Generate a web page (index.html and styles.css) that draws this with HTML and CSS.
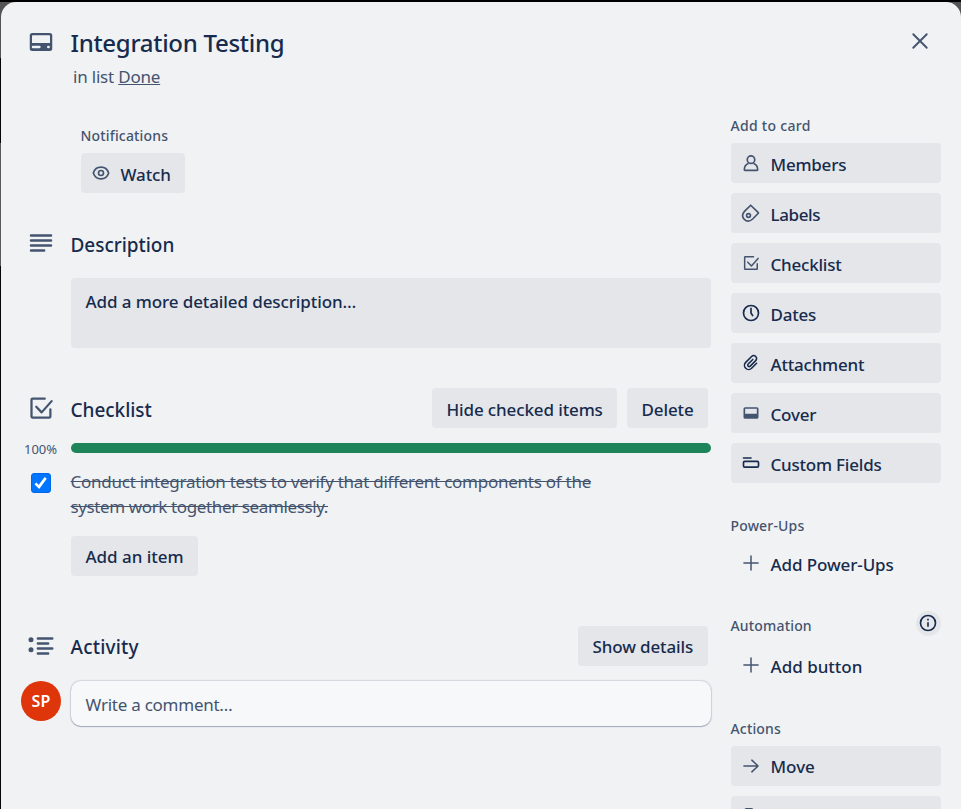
FILE: index.html
```html
<!DOCTYPE html>
<html lang="en">
<head>
<meta charset="utf-8">
<title>Integration Testing</title>
<link rel="stylesheet" href="styles.css">
</head>
<body>
<div class="card">
  <button class="close" aria-label="Close"><svg class="i30" viewBox="0 0 24 24"><path d="M6.6 6.6 17.4 17.4M17.4 6.6 6.6 17.4" fill="none" stroke="currentColor" stroke-width="1.5" stroke-linecap="round"/></svg></button>
  <header class="head">
    <div class="gutter"><svg class="i30" viewBox="0 0 24 24"><path fill="currentColor" fill-rule="evenodd" d="M5 4.800h14a2 2 0 0 1 2 2v10.400a2 2 0 0 1-2 2H5a2 2 0 0 1-2-2V6.800a2 2 0 0 1 2-2Zm.4 1.800a.6.6 0 0 0-.6.6V12.800h14.400V7.200a.6.6 0 0 0-.6-.6ZM5.600 15a1 1 0 0 0 0 2H10.700a1 1 0 0 0 0-2Zm12.200 0a1 1 0 0 0 0 2h.3a1 1 0 0 0 0-2Z"/></svg></div>
    <div><h1>Integration Testing</h1><p class="sub">in list <a>Done</a></p></div>
  </header>
  <div class="columns">
    <main>
      <section class="notif">
        <h3>Notifications</h3>
        <button class="btn watch"><svg class="i20" viewBox="0 0 24 24"><g fill="none" stroke="currentColor" stroke-width="2"><path d="M2.800 12C4.200 7.500 8 5 12 5s7.800 2.500 9.200 7c-1.400 4.500-5.200 7-9.200 7s-7.800-2.500-9.200-7Z"/><circle cx="12" cy="12" r="3"/></g></svg><span>Watch</span></button>
      </section>
      <section class="desc">
        <div class="row"><div class="gutter up"><svg class="i30" viewBox="0 0 24 24"><path d="M4 6h16M4 10h16M4 14h16M4 18h10.500" fill="none" stroke="currentColor" stroke-width="2" stroke-linecap="round"/></svg></div><h2>Description</h2></div>
        <div class="descbox"><span>Add a more detailed description…</span></div>
      </section>
      <section class="check">
        <div class="row"><div class="gutter"><svg class="i30" viewBox="0 0 24 24"><g fill="none" stroke="currentColor" stroke-width="1.800" stroke-linecap="round" stroke-linejoin="round"><path d="M15 4.500H5.200a.8.8 0 0 0-.8.8v13.500a.8.8 0 0 0 .8.8h13.500a.8.8 0 0 0 .8-.8V13"/><path d="m8.200 11 4.300 4.500 8-9"/></g></svg></div><h2>Checklist</h2>
          <div class="tools"><button class="btn hide"><span>Hide checked items</span></button><button class="btn del"><span>Delete</span></button></div></div>
        <div class="progress"><span class="pct">100%</span><div class="bar"></div></div>
        <div class="item"><div class="gutter"><span class="box"><svg viewBox="0 0 20 20"><path d="m3.800 10.400 4 3.900 7.400-10" fill="none" stroke="#fff" stroke-width="3"/></svg></span></div><p><s>Conduct integration tests to verify that different components of the</s><br><s class="tight">system work together seamlessly.</s></p></div>
        <button class="btn additem"><span>Add an item</span></button>
      </section>
      <section class="activity">
        <div class="row"><div class="gutter"><svg class="i30" viewBox="0 0 24 24"><g fill="none" stroke="currentColor" stroke-width="2" stroke-linecap="round"><path d="M9.500 6H21M9.500 10h8.200M9.500 14H21M9.500 18h8.200"/></g><g fill="currentColor"><circle cx="4" cy="7" r="2"/><circle cx="4" cy="15" r="2"/></g></svg></div><h2 class="loose">Activity</h2>
          <div class="tools"><button class="btn show"><span>Show details</span></button></div></div>
        <div class="comment"><div class="avatar">SP</div><div class="field"><span>Write a comment…</span></div></div>
      </section>
    </main>
    <aside>
      <h3 class="addto">Add to card</h3>
      <nav>
        <button class="btn side"><svg class="i20" viewBox="0 0 24 24"><g fill="none" stroke="currentColor" stroke-width="2"><circle cx="12" cy="8" r="4.500"/><path d="M9 12.500C6 13.500 4 16.500 4 20a.8.8 0 0 0 .8.8h14.400a.8.8 0 0 0 .8-.8c0-3.500-2-6.500-5-7.500"/></g></svg><span>Members</span></button>
        <button class="btn side"><svg class="i20" viewBox="0 0 24 24"><g fill="none" stroke="currentColor" stroke-width="2" stroke-linejoin="round"><path d="m11.600 2.700 8.900 8.500a1 1 0 0 1 0 1.400l-6.500 6.600C10.800 22.200 6.800 22.500 4 19.700S1.600 13 4.400 9.800Z"/><circle cx="9" cy="15" r="2.300"/></g></svg><span class="labels">Labels</span></button>
        <button class="btn side"><svg class="i20" viewBox="0 0 24 24"><g fill="none" stroke="currentColor" stroke-width="1.800" stroke-linecap="round" stroke-linejoin="round"><path d="M15 4.500H5.200a.8.8 0 0 0-.8.8v13.500a.8.8 0 0 0 .8.8h13.500a.8.8 0 0 0 .8-.8V13"/><path d="m8.200 11 4.300 4.500 8-9"/></g></svg><span>Checklist</span></button>
        <button class="btn side"><svg class="i20 dark" viewBox="0 0 24 24"><g fill="none" stroke="currentColor" stroke-width="2" stroke-linecap="round"><circle cx="12" cy="12" r="9"/><path d="M12 6.500V12l2 3.200"/></g></svg><span>Dates</span></button>
        <button class="btn side"><svg class="i20 dark" viewBox="0 0 24 24"><path transform="rotate(45 12 12)" d="M17 7.500v8.500a5 5 0 0 1-10 0V6a3.500 3.500 0 0 1 7 0V15.300a1.750 1.750 0 0 1-3.500 0V7.500" fill="none" stroke="currentColor" stroke-width="1.900" stroke-linecap="round"/></svg><span>Attachment</span></button>
        <button class="btn side"><svg class="i20" viewBox="0 0 24 24"><path fill="currentColor" fill-rule="evenodd" d="M5 5h14a2 2 0 0 1 2 2v10a2 2 0 0 1-2 2H5a2 2 0 0 1-2-2V7a2 2 0 0 1 2-2Zm0 1.800v6.200h14V6.800Z"/></svg><span>Cover</span></button>
        <button class="btn side"><svg class="i20 dark" viewBox="0 0 24 24"><g fill="none" stroke="currentColor" stroke-width="2" stroke-linecap="round"><path d="M3 6h9"/><rect x="3" y="10" width="18" height="7" rx="1.500"/></g></svg><span>Custom Fields</span></button>
      </nav>
      <h3 class="gap">Power-Ups</h3>
      <button class="btn side plain"><svg class="i20" viewBox="0 0 24 24"><path d="M12 3.500v17M3.500 12h17" stroke="currentColor" stroke-width="1.800" stroke-linecap="round"/></svg><span class="powerups">Add Power-Ups</span></button>
      <div class="auto"><h3>Automation</h3><span class="info"><svg class="i20 dark" viewBox="0 0 24 24"><circle cx="12" cy="12" r="9" fill="none" stroke="currentColor" stroke-width="2"/><path d="M12 11v5.500M12 7v2" stroke="currentColor" stroke-width="2"/></svg></span></div>
      <button class="btn side plain"><svg class="i20" viewBox="0 0 24 24"><path d="M12 3.500v17M3.500 12h17" stroke="currentColor" stroke-width="1.800" stroke-linecap="round"/></svg><span class="wide">Add button</span></button>
      <h3 class="actions">Actions</h3>
      <nav>
        <button class="btn side move"><svg class="i20" viewBox="0 0 24 24"><path d="M3.500 12h17M13 5l7.500 7-7.500 7" fill="none" stroke="currentColor" stroke-width="1.800" stroke-linecap="round" stroke-linejoin="round"/></svg><span class="wide">Move</span></button>
        <button class="btn side"><svg class="i20" viewBox="0 0 24 24"><rect x="5" y="3.500" width="9" height="14" rx="1.500" fill="none" stroke="currentColor" stroke-width="2"/></svg></button>
      </nav>
    </aside>
  </div>
</div>
</body>
</html>
```
FILE: styles.css
```css
* { box-sizing: border-box; margin: 0; padding: 0; }
html, body { height: 809px; overflow: hidden; }
body {
  padding: 2px 0 0 1px;
  background: linear-gradient(#000 0 2px, #545454 2px 58px, #050505 58px 143px, #5a5a5a 143px 266px, #050505 266px);
  font-family: "Noto Sans", "Open Sans", sans-serif;
  font-size: 17px;
  color: #172b4d;
}
.card { position: relative; height: 807px; overflow: hidden; padding: 26px 20px 0; background: #f1f2f4; border-radius: 15px 15px 0 0; }
.close { position: absolute; top: 24px; right: 26px; width: 30px; height: 30px; border: 0; background: none; color: #44546f; }
svg { display: block; flex: none; }
.i30 { width: 30px; height: 30px; margin-left: -1px; }
.close .i30 { margin-left: 0; }
.i20 { width: 20px; height: 20px; color: #44546f; }
.dark { color: #172b4d; }
.gutter { flex: none; display: flex; justify-content: center; width: 40px; margin-right: 9.5px; color: #44546f; }
.head { display: flex; height: 61px; }
.head .gutter { margin-top: -1px; }
h1 { height: 30px; line-height: 30px; font-size: 24px; font-weight: 500; letter-spacing: -.29px; }
.sub { margin: 7px 0 0 2.500px; line-height: 24px; font-size: 17px; letter-spacing: -.2px; color: #44546f; }
.sub a { text-decoration: underline; }
h2 { font-size: 19px; line-height: 30px; font-weight: 500; letter-spacing: -.04px; }
.loose { letter-spacing: .2px; }
h3 { height: 20px; font-size: 14px; line-height: 21px; font-weight: 500; letter-spacing: .17px; text-indent: -.5px; color: #44546f; white-space: nowrap; }
.addto { line-height: 20px; letter-spacing: .3px; }
span, p { white-space: nowrap; }
.columns { display: flex; gap: 20px; margin-top: 27px; }
main { width: 690px; flex: none; }
aside { width: 210px; flex: none; }
.btn { display: flex; align-items: center; height: 40px; padding: 3px 14.500px 0; border: 0; border-radius: 4px; background: #e4e6ea; font: 500 17px/24px "Noto Sans", "Open Sans", sans-serif; letter-spacing: -.22px; color: #172b4d; }
.notif { margin: 9px 0 0 60px; }
.notif h3 { line-height: 22px; }
.notif .btn { width: 104px; margin-top: 8px; padding-left: 9.500px; gap: 10px; letter-spacing: -.1px; }
.btn svg { margin-top: -3px; }
.row { display: flex; align-items: center; height: 40px; }
.up { margin-top: -4px; }
.desc { margin-top: 32px; }
.descbox { margin: 13px 0 0 50px; height: 70px; padding: 12px 14.500px; border-radius: 4px; background: #e4e6ea; font-weight: 500; letter-spacing: -.1px; line-height: 24px; }
.check { margin-top: 40px; }
.check h2 { margin-top: 4px; }
.activity h2 { margin-top: 2px; }
.tools { display: flex; gap: 10px; margin: 0 3px 0 auto; }
.tools span { letter-spacing: -.13px; }
.hide { width: 185px; }
.del { width: 81px; }
.progress { display: flex; align-items: center; height: 10px; margin-top: 15px; }
.pct { width: 50px; padding: 2px 0 0 3px; font-size: 13px; line-height: 20px; color: #44546f; }
.bar { flex: 1; height: 10px; border-radius: 5px; background: #1f845a; }
.item { display: flex; margin-top: 17px; color: #44546f; line-height: 25px; }
.item p { margin-top: -1px; letter-spacing: -.25px; }
.item .tight { letter-spacing: -.38px; }
.box { width: 20px; height: 20px; margin-top: 3px; border-radius: 3px; background: #0075ff; border: 1px solid #0068e4; }
.additem { width: 127px; margin: 17px 0 0 50px; padding-top: 2px; letter-spacing: -.03px; }
.activity { margin-top: 50px; }
.show { width: 130px; padding-top: 2px; }
.comment { display: flex; align-items: flex-start; margin-top: 15px; }
.avatar { width: 40px; height: 40px; margin-right: 10px; border-radius: 50%; background: #de350b; color: #fff; font-size: 16px; font-weight: 600; line-height: 40px; text-align: center; letter-spacing: .3px; }
.field { flex: 1; height: 45px; padding: 12px 14.500px; border-radius: 10px; background: #f7f8f9; box-shadow: 0 1px 1px #091e4240, 0 0 1px 1px #091e4222; line-height: 24px; letter-spacing: -.25px; color: #44546f; }
nav { display: flex; flex-direction: column; gap: 10px; margin-top: 7px; }
.side { width: 210px; padding-left: 9.500px; gap: 10px; }
.labels { letter-spacing: -.4px; }
.powerups { letter-spacing: -.1px; }
.wide { letter-spacing: 0; }
.move { padding-top: 2px; }
.move svg { margin-top: -2px; }
.plain { background: none; margin-top: 8px; }
.gap { margin-top: 32px; }
.auto { display: flex; justify-content: space-between; margin-top: 28px; height: 29px; }
.auto h3 { margin-top: 4px; }
.info { display: flex; align-items: center; justify-content: center; width: 25px; height: 25px; border-radius: 50%; background: #e4e6ea; }
.info svg { margin: -1px 0 0 -1px; }
.auto + .plain { margin-top: 5px; }
.actions { margin-top: 33px; }
.actions + nav { margin-top: 8px; }
```
